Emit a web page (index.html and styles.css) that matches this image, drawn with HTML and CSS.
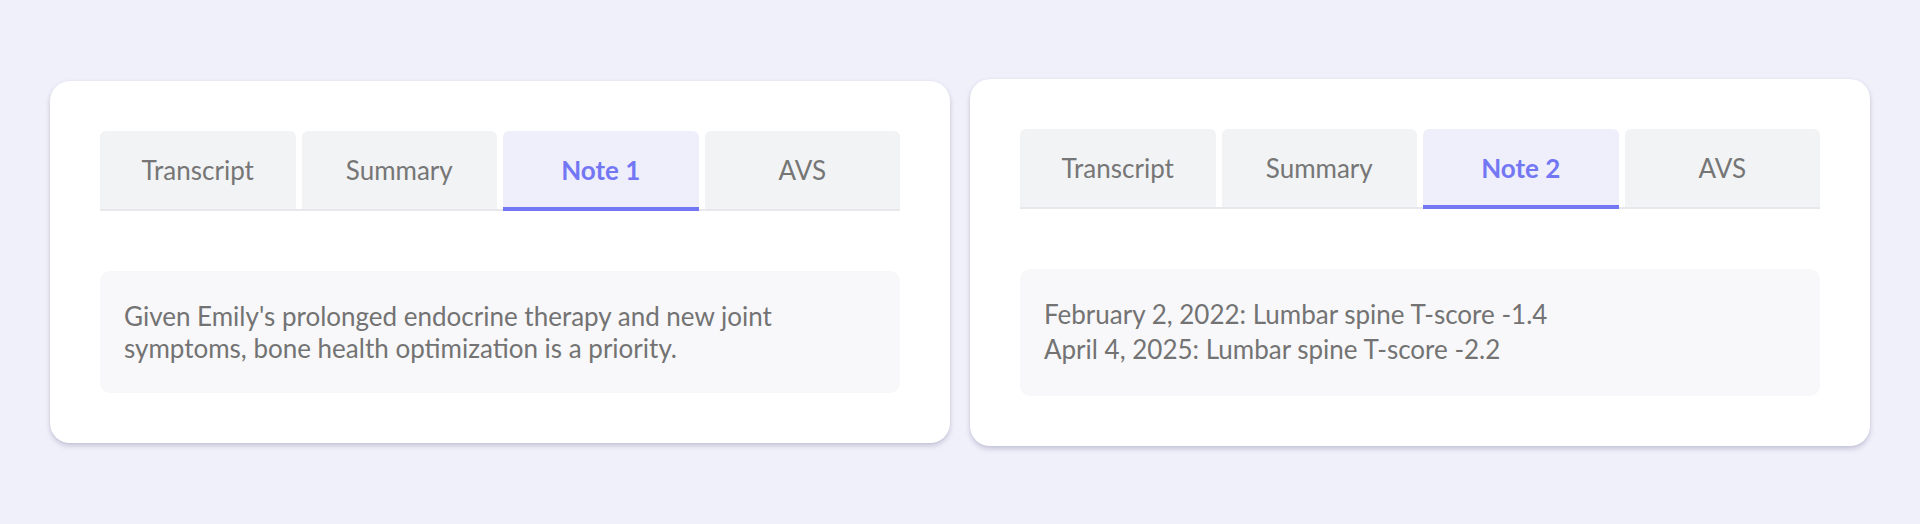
FILE: index.html
```html
<!DOCTYPE html>
<html lang="en">
<head>
<meta charset="utf-8">
<title>Notes</title>
<link rel="stylesheet" href="styles.css">
</head>
<body>
  <div class="card card-left">
    <div class="tabs">
      <div class="tab">Transcript</div>
      <div class="tab">Summary</div>
      <div class="tab active">Note 1</div>
      <div class="tab">AVS</div>
    </div>
    <div class="content content-para">
      <p class="para">Given Emily's prolonged endocrine therapy and new joint symptoms, bone health optimization is a priority.</p>
    </div>
  </div>
  <div class="card card-right">
    <div class="tabs">
      <div class="tab">Transcript</div>
      <div class="tab">Summary</div>
      <div class="tab active">Note 2</div>
      <div class="tab">AVS</div>
    </div>
    <div class="content">
      <div class="line">February 2, 2022: Lumbar spine T-score -1.4</div>
      <div class="line">April 4, 2025: Lumbar spine T-score -2.2</div>
    </div>
  </div>
</body>
</html>
```

FILE: styles.css
```css
html, body {
  margin: 0;
  padding: 0;
}

body {
  height: 524px;
  box-sizing: border-box;
  background: #f0f0fb;
  display: flex;
  align-items: center;
  gap: 20px;
  padding: 0 50px;
  font-family: "Lato", "Liberation Sans", sans-serif;
}

.card {
  flex: 1;
  background: #ffffff;
  border-radius: 20px;
  padding: 50px;
  box-shadow: 0 3px 5px rgba(90, 90, 130, 0.28), 0 0 2px rgba(90, 90, 130, 0.08);
}

.tabs {
  display: flex;
  gap: 6px;
  border-bottom: 2px solid #e8e8ec;
}

.tab {
  flex: 1;
  position: relative;
  height: 78px;
  display: flex;
  align-items: center;
  justify-content: center;
  background: #f2f3f5;
  border-radius: 6px 6px 0 0;
  color: #767676;
  font-size: 26px;
}

.tab.active {
  background: #efeffc;
  color: #7377f3;
  font-weight: 700;
}

.tab.active::after {
  content: "";
  position: absolute;
  left: 0;
  right: 0;
  bottom: -2px;
  height: 4px;
  background: #7377f3;
}

.content {
  margin-top: 60px;
  background: #f8f8fa;
  border-radius: 10px;
  padding: 28px 24px;
  color: #737373;
  font-size: 26px;
}

.content-para {
  padding: 29px 24px;
}

.para {
  margin: 0;
  line-height: 32px;
}

.line {
  line-height: 35.5px;
}
```
